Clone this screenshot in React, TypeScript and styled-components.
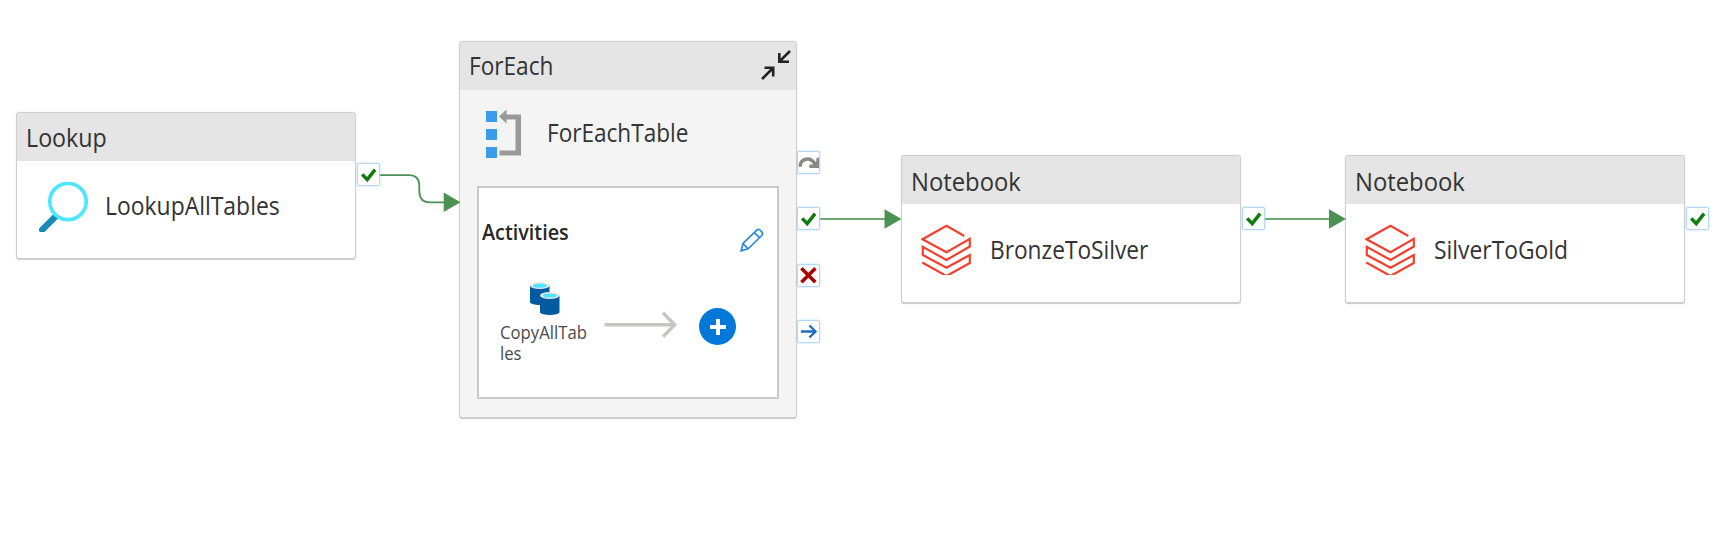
import React from "react";
import styled, { createGlobalStyle } from "styled-components";

const GlobalStyle = createGlobalStyle`
  * { box-sizing: border-box; }
  body { margin: 0; background: #fff; overflow: hidden; }
`;

const Canvas = styled.main`
  position: relative;
  width: 1713px;
  height: 533px;
  background: #fff;
  font-family: "Open Sans", "Noto Sans", sans-serif;
  color: #333;
  overflow: hidden;
`;

const Wires = styled.svg`
  position: absolute;
  inset: 0;
  width: 1713px;
  height: 533px;
`;

const Node = styled.section<{ $x: number; $y: number; $w: number; $h: number; $fill?: string }>`
  position: absolute;
  left: ${(p) => p.$x}px;
  top: ${(p) => p.$y}px;
  width: ${(p) => p.$w}px;
  height: ${(p) => p.$h}px;
  display: flex;
  flex-direction: column;
  background: ${(p) => p.$fill ?? "#fff"};
  border: 1px solid #cfcfcf;
  border-bottom-width: 2px;
  border-radius: 4px;
  box-shadow: 0 0 1px #bbb;
  overflow: hidden;
`;

const Header = styled.header`
  flex: none;
  display: flex;
  justify-content: space-between;
  height: 48px;
  padding: 0 5px 0 9px;
  background: #e5e5e5;
`;

const Label = styled.span<{ $size?: number; $weight?: number; $condense?: number; $dy?: number }>`
  margin-top: ${(p) => p.$dy ?? 0}px;
  font-size: ${(p) => p.$size ?? 25}px;
  font-weight: ${(p) => p.$weight ?? 400};
  line-height: 48px;
  white-space: nowrap;
  transform: scaleX(${(p) => p.$condense ?? 1});
  transform-origin: 0 50%;
`;

const Body = styled.div<{ $left: number; $gap: number; $top: number }>`
  display: flex;
  align-items: flex-start;
  gap: ${(p) => p.$gap}px;
  padding: ${(p) => p.$top}px 0 0 ${(p) => p.$left}px;
`;

const Icon = styled.svg<{ $dy?: number }>`
  display: block;
  flex: none;
  overflow: hidden;
  margin-top: ${(p) => p.$dy ?? 0}px;
`;

const Panel = styled.div`
  width: 302px;
  height: 213px;
  margin: 28px 0 0 17px;
  background: #fff;
  border: 2px solid #cacaca;
`;

const PanelHead = styled.div`
  display: flex;
  justify-content: space-between;
  align-items: flex-start;
  height: 94px;
  padding: 20px 13px 0 3px;
  color: #282828;
`;

const PanelRow = styled.div`
  display: flex;
  align-items: flex-start;
  padding-left: 21px;
`;

const Activity = styled.div`
  display: flex;
  flex-direction: column;
  width: 104px;
  color: #4c4c4c;
`;

const ActivityName = styled.span`
  width: 99px;
  margin-top: 6px;
  font-size: 19px;
  line-height: 21.3px;
  transform: scaleX(0.88);
  transform-origin: 0 50%;
`;

const AddButton = styled.button`
  display: flex;
  align-items: center;
  justify-content: center;
  width: 37px;
  height: 37px;
  margin: 26px 0 0 21px;
  padding: 0;
  border: 0;
  border-radius: 50%;
  background: #0078d7;
`;

const Port = styled.div<{ $x: number; $y: number }>`
  position: absolute;
  left: ${(p) => p.$x}px;
  top: ${(p) => p.$y}px;
  width: 23px;
  height: 23px;
  background: #fff;
  border: 1px solid #b5d8f6;
  border-radius: 2px;
  box-shadow: 0 0 2px #a5d0f5;
`;

const portShapes = {
  ok: <path d="M4.8 11.2 9.8 16.4 17.7 6.4" stroke="#107c10" strokeWidth="3.5" />,
  fail: <path d="M4 4 18 18M18 4 4 18" stroke="#a80000" strokeWidth="3.5" />,
  done: <path d="M3.5 11.3H18.5M12 5.3 18.2 11.3 12 17.3" stroke="#1b6ec2" strokeWidth="2.3" />,
  skip: (
    <>
      <path d="M2.7 15.5C3 6.8 13 5 17.5 12.8" stroke="#8a8886" strokeWidth="3.5" />
      <path d="M22 6.5V16.7H12V13.3H15.5L19 9.5V6.5Z" fill="#8a8886" />
    </>
  ),
};

function Outcome({ x, y, kind }: { x: number; y: number; kind: keyof typeof portShapes }) {
  return (
    <Port $x={x} $y={y}>
      <Icon width="21" height="21" viewBox="0.6 0.8 21 21" fill="none">
        {portShapes[kind]}
      </Icon>
    </Port>
  );
}

const Stack = () => (
  <Icon width="51" height="51" viewBox="0 0 51 51" fill="none" $dy={20}>
    <path
      d="M43.3 12 25.5 1.7 1.5 15.2 25.5 28.2 48.8 14.8V22.5L25.5 36 1.8 22.9V31L25.5 43.8 48.8 31V39L25.5 52 1.3 38.5"
      stroke="#f2402f"
      strokeWidth="2.2"
    />
  </Icon>
);

function Notebook({ x, name, condense }: { x: number; name: string; condense: number }) {
  return (
    <Node $x={x} $y={155} $w={340} $h={148.5}>
      <Header>
        <Label $condense={0.952} $dy={1}>Notebook</Label>
      </Header>
      <Body $left={19} $gap={18} $top={0}>
        <Stack />
        <Label $dy={21} $condense={condense}>
          {name}
        </Label>
      </Body>
    </Node>
  );
}

export default function App() {
  return (
    <>
      <GlobalStyle />
      <Canvas>
        <Node $x={16} $y={112} $w={340} $h={148}>
          <Header>
            <Label $condense={0.93}>Lookup</Label>
          </Header>
          <Body $left={22} $gap={17} $top={21}>
            <Icon width="49" height="50" viewBox="0 0 49 50" fill="none">
              <path d="M19 32 1 50" stroke="#198ab3" strokeWidth="6.5" />
              <circle cx="29" cy="19.5" r="18.2" fill="#fff" stroke="#50e6ff" strokeWidth="3.7" />
            </Icon>
            <Label $condense={0.917} $dy={-1}>LookupAllTables</Label>
          </Body>
        </Node>

        <Node $x={459} $y={41} $w={338} $h={377.5} $fill="#f4f4f4">
          <Header>
            <Label $condense={0.905} $dy={-1}>ForEach</Label>
            <Icon width="30" height="30" viewBox="0 0 30 30" fill="none" stroke="#222" strokeWidth="2.6" $dy={8}>
              <path d="M29 1 18.5 11.5M18.3 3V11.7H28M1 29 12 18M3.5 17.8H12.2V26.5" />
            </Icon>
          </Header>
          <Body $left={26} $gap={25} $top={19}>
            <Icon width="36" height="49" viewBox="0.5 0 36 49">
              <path d="M0.5 2h11v11h-11zM0.5 20h11v11h-11zM0.5 38h11v11h-11z" fill="#3a9ce8" />
              <path d="M13.5 7.5 21 .5v5h14.5v41H14v-5h16V10.5H21v4z" fill="#999" />
            </Icon>
            <Label $condense={0.903} $dy={-1}>ForEachTable</Label>
          </Body>
          <Panel>
            <PanelHead>
              <Label $size={21} $weight={600} $condense={0.942}>Activities</Label>
              <Icon width="24" height="24" viewBox="0 0 24 24" fill="none" stroke="#2b88d8" strokeWidth="1.7" $dy={20}>
                <path d="M1.2 22.8 3 15.5 16.5 2.3C19-.2 24.3 4.7 21.7 7.5L8.2 20.8ZM3 15.5 8.2 20.8M14.3 4.5 19.6 9.6" />
              </Icon>
            </PanelHead>
            <PanelRow>
              <Activity>
                <Icon width="60" height="34" viewBox="-30 0 60 34">
                  <path d="M0 3.5V20c0 4 19.5 4 19.5 0V3.5z" fill="#005ba1" />
                  <ellipse cx="9.75" cy="3.7" rx="9.75" ry="3.4" fill="#e8e8e8" />
                  <ellipse cx="9.75" cy="3.7" rx="7.3" ry="2.1" fill="#50e6ff" />
                  <path d="M10 13.5V30c0 4 19.5 4 19.5 0V13.5z" fill="#005ba1" />
                  <ellipse cx="19.75" cy="13.5" rx="9.75" ry="3.4" fill="#e8e8e8" />
                  <ellipse cx="19.75" cy="13.5" rx="7.3" ry="2.1" fill="#50e6ff" />
                </Icon>
                <ActivityName>
                  CopyAllTab
                  <br />
                  les
                </ActivityName>
              </Activity>
              <Icon width="74" height="28" viewBox="0 0 74 28" fill="none" stroke="#c8c6c4" strokeWidth="3.4" $dy={29}>
                <path d="M0.5 13.7H71M59 1.7 70.7 13.7 59 25.7" />
              </Icon>
              <AddButton aria-label="Add activity">
                <Icon width="16" height="16" viewBox="0 0 16 16" stroke="#fff" strokeWidth="4">
                  <path d="M8 0V16M0 8H16" />
                </Icon>
              </AddButton>
            </PanelRow>
          </Panel>
        </Node>

        <Notebook x={901} name="BronzeToSilver" condense={0.908} />
        <Notebook x={1345} name="SilverToGold" condense={0.914} />

        <Wires viewBox="0 0 1713 533" fill="none">
          <path d="M380 175.2H409Q419.3 175.2 419.3 186V191Q419.3 202.3 430 202.3H445" stroke="#4a9152" strokeWidth="1.8" />
          <path d="M820 219H886M1265 219H1330" stroke="#6ba86f" strokeWidth="2" />
          <path d="M443.7 192.5 460.5 202.3 443.7 212ZM884.5 209.3 901.5 219 884.5 228.7ZM1329 209.3 1346 219 1329 228.7Z" fill="#4a9152" />
        </Wires>

        <Outcome x={357} y={163} kind="ok" />
        <Outcome x={797} y={151} kind="skip" />
        <Outcome x={797} y={207} kind="ok" />
        <Outcome x={797} y={264} kind="fail" />
        <Outcome x={797} y={320} kind="done" />
        <Outcome x={1242} y={207} kind="ok" />
        <Outcome x={1686} y={207} kind="ok" />
      </Canvas>
    </>
  );
}
